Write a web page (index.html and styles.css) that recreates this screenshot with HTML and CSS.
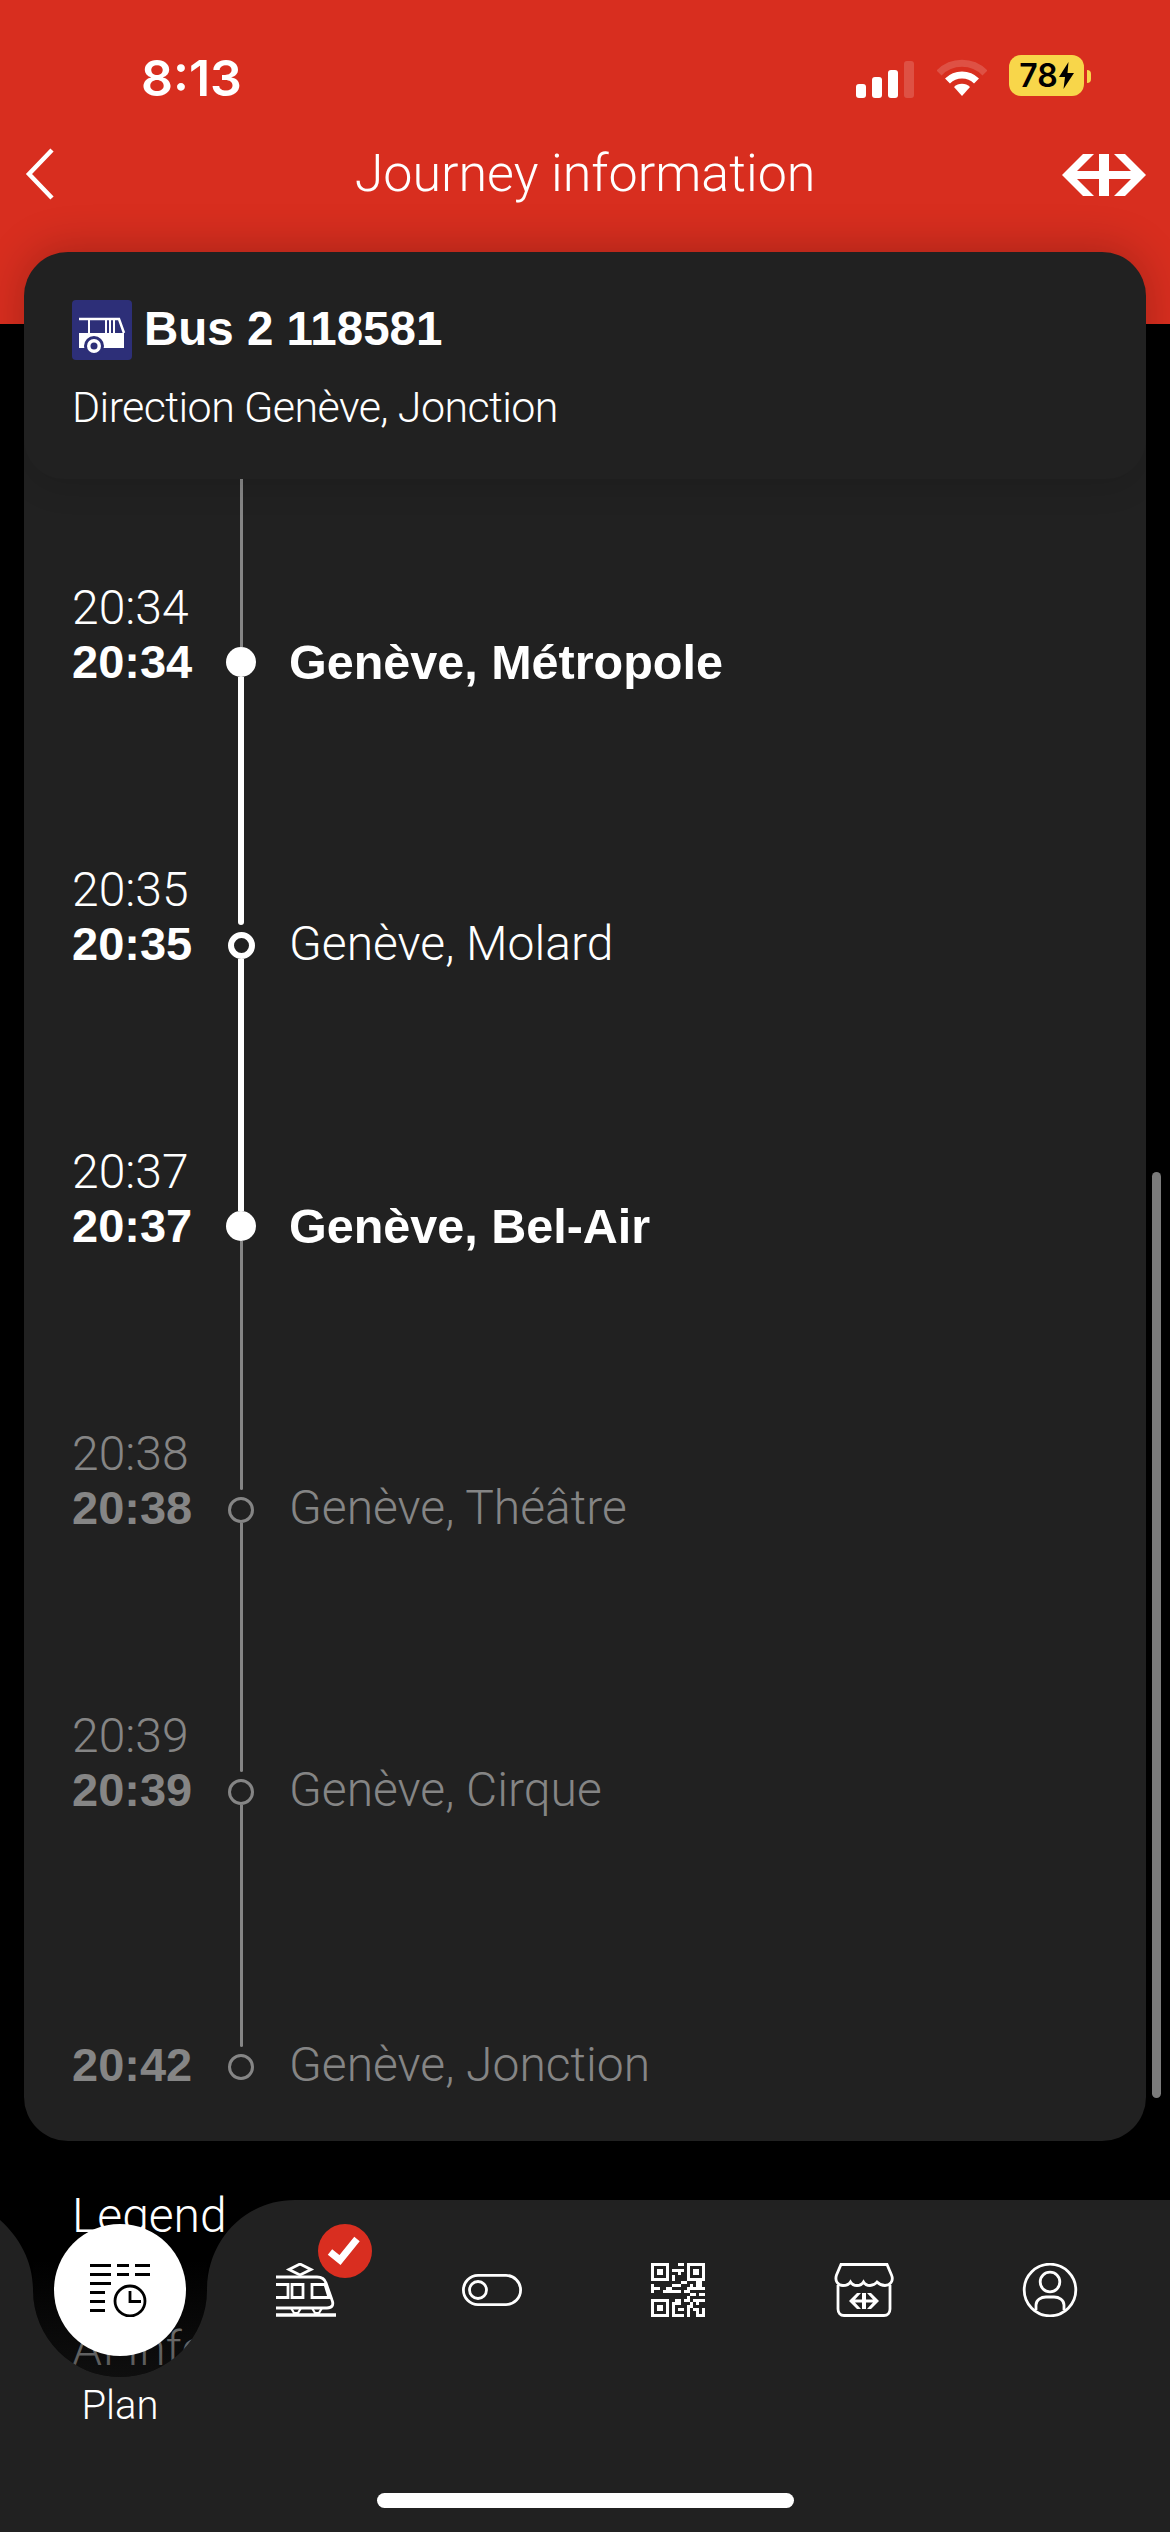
FILE: index.html

```html
<!DOCTYPE html>
<html lang="en">
<head>
    <meta charset="UTF-8">
    <title>Journey information</title>
    <link rel="stylesheet" href="styles.css">
</head>
<body>
<div class="page">
    <header class="top">
        <div class="status">
            <span class="clock">8:13</span>
            <div class="status-icons">
                <div class="signal"><i class="b1"></i><i class="b2"></i><i class="b3"></i><i class="b4"></i></div>
                <svg class="wifi" width="50" height="38" viewBox="0 0 50 38">
                    <path d="M2 14 A32 32 0 0 1 48 14" fill="none" stroke="#fff" stroke-opacity=".17" stroke-width="7"/>
                    <path d="M10.500 22 A20.500 20.500 0 0 1 39.500 22" fill="none" stroke="#fff" stroke-width="7"/>
                    <path d="M25 37 L17 28 A11.500 11.500 0 0 1 33 28 Z" fill="#fff"/>
                </svg>
                <div class="battery"><span>78</span><svg width="15" height="27" viewBox="0 0 15 27"><path d="M9.500 0 L0 15 H6 L4.500 27 L15 11 H8.500 Z"/></svg></div>
                <i class="battery-nub"></i>
            </div>
        </div>
        <nav class="nav">
            <svg class="back" width="30" height="52" viewBox="0 0 30 52"><path d="M27 2 L4 26 L27 50" fill="none" stroke="#fff" stroke-width="4.500"/></svg>
            <h1>Journey information</h1>
            <svg class="logo" width="84" height="42" viewBox="0 0 84 42"><path fill="#fff" d="M0 21 L21 0 H32 L15 17 H37 V0 H47 V17 H69 L52 0 H63 L84 21 L63 42 H52 L69 25 H47 V42 H37 V25 H15 L32 42 H21 Z"/></svg>
        </nav>
    </header>

    <main class="card">
        <div class="card-head">
            <div class="line-title">
                <svg class="bus" width="60" height="60" viewBox="0 0 60 60">
                    <rect width="60" height="60" rx="4" fill="#2d2f78"/>
                    <path d="M7 19 H47 L52 33" fill="none" stroke="#fff" stroke-width="2.500"/>
                    <path d="M17 19 V34 M34 19 V34 M38 19 V34 M42 19 V34" stroke="#fff" stroke-width="2"/>
                    <path d="M7 33 H52 V48 H7 Z" fill="#fff"/>
                    <circle cx="22" cy="46" r="10" fill="#2d2f78"/>
                    <circle cx="22" cy="46" r="7" fill="#fff"/>
                    <circle cx="22" cy="46" r="3.500" fill="#2d2f78"/>
                </svg>
                <strong>Bus 2 118581</strong>
            </div>
            <p class="direction">Direction Genève, Jonction</p>
        </div>

        <ul class="stops">
            <li class="stop first">
                <div class="times"><span class="arr">20:34</span><span class="dep">20:34</span></div>
                <div class="track"><i class="stem stem-dim"></i><i class="node node-solid"></i></div>
                <div class="name name-strong">Genève, Métropole</div>
            </li>
            <li class="stop">
                <div class="times"><span class="arr">20:35</span><span class="dep">20:35</span></div>
                <div class="track"><i class="stem stem-on gap"></i><i class="node node-ring"></i></div>
                <div class="name">Genève, Molard</div>
            </li>
            <li class="stop">
                <div class="times"><span class="arr">20:37</span><span class="dep">20:37</span></div>
                <div class="track"><i class="stem stem-on"></i><i class="node node-solid"></i></div>
                <div class="name name-strong">Genève, Bel-Air</div>
            </li>
            <li class="stop later">
                <div class="times"><span class="arr">20:38</span><span class="dep">20:38</span></div>
                <div class="track"><i class="stem stem-dim gap"></i><i class="node node-thin"></i></div>
                <div class="name">Genève, Théâtre</div>
            </li>
            <li class="stop later">
                <div class="times"><span class="arr">20:39</span><span class="dep">20:39</span></div>
                <div class="track"><i class="stem stem-dim gap"></i><i class="node node-thin"></i></div>
                <div class="name">Genève, Cirque</div>
            </li>
            <li class="stop later last">
                <div class="times"><span class="dep">20:42</span></div>
                <div class="track"><i class="stem stem-dim gap"></i><i class="node node-thin"></i></div>
                <div class="name">Genève, Jonction</div>
            </li>
        </ul>
    </main>

    <div class="after-card">
        <p class="legend">Legend</p>
        <p class="legend legend-dim">AI Info</p>
    </div>

    <i class="scrollbar"></i>

    <footer class="tabbar">
        <svg class="tabbar-bg" width="1170" height="332" viewBox="0 0 1170 332">
            <defs>
                <linearGradient id="notchFade" x1="0" y1="0" x2="0" y2="1">
                    <stop offset="0" stop-color="#212121" stop-opacity="0"/>
                    <stop offset="1" stop-color="#212121" stop-opacity=".45"/>
                </linearGradient>
            </defs>
            <path fill="url(#notchFade)" d="M33 60 H207 V90 A87 87 0 0 1 33 90 Z"/>
            <path fill="#212121" d="M0 20 C20 38 33 62 33 90 A87 87 0 0 0 207 90 C207 40 245 0 295 0 H1170 V332 H0 Z"/>
        </svg>

        <div class="tabs">
            <div class="tab tab-active">
                <span class="tab-circle">
                    <svg width="62" height="54" viewBox="0 0 62 54">
                        <path d="M0 2.500 H21 M27 2.500 H39 M45 2.500 H60 M0 11.500 H21 M27 11.500 H39 M45 11.500 H60 M0 20.500 H21 M0 29.500 H15 M0 38.500 H15 M0 47.500 H15" stroke="#000" stroke-width="3" fill="none"/>
                        <circle cx="40" cy="38" r="15" fill="none" stroke="#000" stroke-width="2.800"/>
                        <path d="M40 28 V38.500 H51" fill="none" stroke="#000" stroke-width="2.800"/>
                    </svg>
                </span>
                <span class="tab-label">Plan</span>
            </div>
            <div class="tab">
                <span class="tab-icon">
                    <svg width="60" height="54" viewBox="0 0 60 54" fill="none" stroke="#fff" stroke-width="2.800">
                        <path d="M24 1 L35 6.500 L24 12 L13 6.500 Z"/>
                        <path d="M0 14 H41 C46 14 49 17 50 20 L56 37 C58 42 56 45 51 45 H0"/>
                        <path d="M0 21.500 H12 V34.500 H0 M16 21.500 H27 V34.500 H16 Z M36 21.500 H49 L53 34.500 H36 Z"/>
                        <path d="M15 45 L18 50 H22 L25 45 M36 45 L39 50 H43 L46 45" stroke-width="2.200"/>
                        <path d="M0 52 H60" stroke-width="3.500"/>
                    </svg>
                    <span class="badge">
                        <svg width="54" height="54" viewBox="0 0 54 54"><path d="M12 28 L22 36 L39 15" fill="none" stroke="#fff" stroke-width="7"/></svg>
                    </span>
                </span>
            </div>
            <div class="tab">
                <span class="tab-icon">
                    <svg width="60" height="54" viewBox="0 0 60 54" fill="none" stroke="#fff" stroke-width="2.800">
                        <rect x="1.400" y="12.400" width="57.200" height="29.200" rx="14.600"/>
                        <circle cx="16" cy="27" r="8.500"/>
                    </svg>
                </span>
            </div>
            <div class="tab">
                <span class="tab-icon">
                    <svg width="54" height="54" viewBox="0 0 18 18">
                        <path fill="#fff" fill-rule="evenodd" d="M0 0h6v6h-6z M1 1v4h4v-4z M2 2h2v2h-2z M12 0h6v6h-6z M13 1v4h4v-4z M14 2h2v2h-2z M0 12h6v6h-6z M1 13v4h4v-4z M2 14h2v2h-2z"/>
                        <path fill="#fff" d="M9 0h2v1h-2z M7 2h4v1h-4z M9 3h1v1h-1z M7 4h1v2h-1z M0 7h1v3h-1z M1 8h2v1h-2z M10 6h2v1h-2z M7 7h3v1h-3z M5 8h2v1h-2z M4 9h2v1h-2z M6 9h1v1h-1z M7 9h3v1h-3z M13 7h1v1h-1z M15 6h2v2h-2z M12 8h6v1h-6z M11 9h2v1h-2z M16 10h2v1h-2z M12 11h1v2h-1z M13 10h2v1h-2z M8 12h2v1h-2z M11 12h1v1h-1z M14 12h4v1h-4z M7 13h3v1h-3z M13 13h1v2h-1z M15 13h1v1h-1z M7 14h1v4h-1z M7 17h4v1h-4z M9 15h2v1h-2z M12 14h1v4h-1z M14 15h2v1h-2z M15 16h1v2h-1z M16 17h2v1h-2z M17 15h1v2h-1z"/>
                    </svg>
                </span>
            </div>
            <div class="tab">
                <span class="tab-icon">
                    <svg width="60" height="54" viewBox="0 0 60 54" fill="none" stroke="#fff" stroke-width="2.800">
                        <path d="M7 1.500 H53 L57.500 12 C60 18 56 22.500 51 22.500 C47 22.500 45 21 43 19 C41 21.500 38 22.500 36 22.500 C33 22.500 31 21.500 29.500 19 C28 21.500 25 22.500 23 22.500 C20.500 22.500 18 21.500 16.500 19 C15 21.500 12 22.500 9 22.500 C4 22.500 0.500 18 2.500 12 Z"/>
                        <path d="M4 22 V46 C4 50 6.500 52.500 10 52.500 H50 C53.500 52.500 56 50 56 46 V22"/>
                        <path fill="#fff" stroke="none" d="M15 38 L23 30 H27 L21 36.500 H28 V30 H32 V36.500 H39 L33 30 H37 L45 38 L37 46 H33 L39 39.500 H32 V46 H28 V39.500 H21 L27 46 H23 Z"/>
                    </svg>
                </span>
            </div>
            <div class="tab">
                <span class="tab-icon">
                    <svg width="56" height="54" viewBox="0 0 56 54" fill="none" stroke="#fff" stroke-width="2.800">
                        <circle cx="28" cy="27" r="25.800"/>
                        <circle cx="28" cy="19" r="9.800"/>
                        <path d="M14 47 V42 C14 37 19 34 24 34 H32 C37 34 42 37 42 42 V47"/>
                    </svg>
                </span>
            </div>
        </div>
        <i class="home"></i>
    </footer>
</div>
</body>
</html>
```

FILE: styles.css

```css
* {
    box-sizing: border-box;
}
html, body {
    margin: 0;
    background: #000;
}
.page {
    position: relative;
    width: 1170px;
    height: 2532px;
    overflow: hidden;
    background: #000;
    color: #fff;
    font-family: "Liberation Sans", Arial, sans-serif;
}
i {
    display: block;
}

/* red top */
.top {
    height: 324px;
    background: #d82e1f;
}
.status {
    display: flex;
    justify-content: space-between;
    height: 146px;
    padding: 48px 79px 0 141px;
}
.clock {
    font-family: Inter, sans-serif;
    font-weight: 600;
    font-size: 50px;
    line-height: 60px;
}
.status-icons {
    display: flex;
    align-items: flex-start;
    padding-top: 9px;
}
.signal {
    display: flex;
    align-items: flex-end;
    gap: 6px;
    height: 39px;
    margin-top: 2px;
    margin-right: 23px;
}
.signal i {
    width: 10px;
    background: #fff;
    border-radius: 3px;
}
.b1 { height: 14px; }
.b2 { height: 21px; }
.b3 { height: 28px; }
.signal .b4 {
    height: 37px;
    background: rgba(255, 255, 255, 0.17);
}
.wifi {
    margin-top: 2px;
    margin-right: 22px;
}
.battery {
    display: flex;
    align-items: center;
    justify-content: center;
    gap: 1px;
    width: 75px;
    height: 41px;
    margin-top: -2px;
    background: #f8d64a;
    border-radius: 12px;
    color: #000;
    font-family: Inter, sans-serif;
    font-weight: 600;
    font-size: 32px;
}
.battery-nub {
    width: 4px;
    height: 13px;
    margin-top: 13px;
    margin-left: 3px;
    background: #f8d64a;
    border-radius: 0 6px 6px 0;
}
.nav {
    display: grid;
    grid-template-columns: 1fr auto 1fr;
    align-items: center;
    height: 56px;
    padding: 0 24px;
}
.nav h1 {
    margin: 0;
    font-family: Roboto, sans-serif;
    font-weight: 300;
    font-size: 52px;
    line-height: 56px;
}
.back {
    margin-left: 1px;
}
.logo {
    justify-self: end;
    margin-top: 2px;
}

/* card */
.card {
    position: relative;
    height: 1889px;
    margin: -72px 24px 0;
    background: #212121;
    border-radius: 44px;
    overflow: hidden;
    box-shadow: 0 -4px 44px rgba(0, 0, 0, 0.22);
}
.card-head {
    position: relative;
    height: 227px;
    padding: 48px 0 0 48px;
    border-radius: 0 0 40px 40px;
    box-shadow: 0 10px 30px rgba(0, 0, 0, 0.1);
}
.line-title {
    display: flex;
    align-items: center;
    gap: 12px;
    height: 60px;
    font-size: 47.500px;
    line-height: 56px;
}
.line-title strong {
    margin-top: -2px;
}
.direction {
    margin: 22px 0 0;
    font-family: Roboto, sans-serif;
    font-weight: 300;
    font-size: 43px;
    letter-spacing: -0.6px;
    line-height: 50px;
}

/* stops */
.stops {
    margin: 0;
    padding: 0 0 0 48px;
    list-style: none;
}
.stop {
    display: grid;
    grid-template-columns: 151px 36px auto;
    column-gap: 0;
    align-items: end;
    height: 282px;
}
.first {
    height: 198px;
}
.last {
    height: 275px;
}
.times {
    display: flex;
    flex-direction: column;
}
.arr {
    margin-bottom: 24px;
    font-family: Roboto, sans-serif;
    font-weight: 300;
    font-size: 48px;
    line-height: 30px;
}
.dep {
    font-weight: 700;
    font-size: 47px;
    line-height: 30px;
}
.track {
    display: flex;
    flex-direction: column;
    align-items: center;
    align-self: stretch;
}
.stem {
    flex: 1;
}
.stem-on {
    width: 6px;
    background: #fff;
}
.stem-dim {
    width: 3px;
    background: #858585;
}
.gap {
    margin-bottom: 7px;
    border-radius: 0 0 3px 3px;
}
.node {
    flex: none;
    border-radius: 50%;
}
.node-solid {
    width: 30px;
    height: 30px;
    background: #fff;
}
.node-ring {
    width: 27px;
    height: 27px;
    border: 6px solid #fff;
}
.node-thin {
    width: 26px;
    height: 26px;
    border: 3px solid #858585;
}
.name {
    padding-left: 30px;
    font-family: Roboto, sans-serif;
    font-weight: 300;
    font-size: 48px;
    line-height: 30px;
}
.name-strong {
    font-family: "Liberation Sans", Arial, sans-serif;
    font-weight: 700;
    font-size: 48.500px;
}
.later .times,
.later .name {
    color: #858585;
}

/* stuff under the tab bar */
.after-card {
    padding: 48px 0 0 72px;
}
.legend {
    margin: 0;
    font-family: Roboto, sans-serif;
    font-weight: 300;
    font-size: 48px;
    line-height: 54px;
}
.legend-dim {
    margin-top: 79px;
    color: #858585;
}
.scrollbar {
    position: absolute;
    top: 1172px;
    left: 1152px;
    width: 9px;
    height: 926px;
    background: #7b7b7b;
    border-radius: 5px;
}

/* tab bar */
.tabbar {
    position: absolute;
    left: 0;
    bottom: 0;
    width: 1170px;
    height: 332px;
}
.tabbar-bg {
    position: absolute;
    left: 0;
    top: 0;
}
.tabs {
    position: relative;
    display: flex;
    padding-left: 27px;
}
.tab {
    display: flex;
    flex-direction: column;
    align-items: center;
    width: 186px;
    padding-top: 63px;
}
.tab-active {
    padding-top: 24px;
}
.tab-circle {
    display: flex;
    align-items: center;
    justify-content: center;
    width: 132px;
    height: 132px;
    padding-left: 2px;
    background: #fff;
    border-radius: 50%;
}
.tab-label {
    margin-top: 26px;
    font-family: Roboto, sans-serif;
    font-weight: 300;
    font-size: 40px;
    line-height: 48px;
}
.tab-icon {
    position: relative;
    display: block;
    height: 54px;
}
.tab-icon svg {
    display: block;
}
.badge {
    position: absolute;
    top: -39px;
    left: 42px;
    width: 54px;
    height: 54px;
    background: #d92e20;
    border-radius: 50%;
}
.home {
    position: absolute;
    left: 377px;
    top: 293px;
    width: 417px;
    height: 15px;
    background: #fff;
    border-radius: 8px;
}
```
